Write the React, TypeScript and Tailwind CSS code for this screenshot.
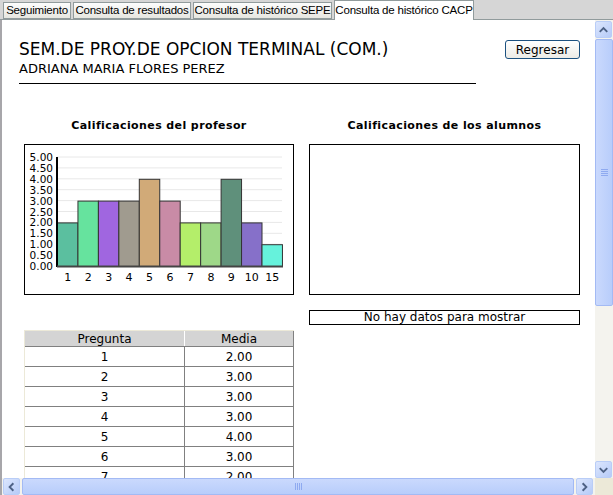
import React from "react";

const data = [
  { q: "1", v: 2 },
  { q: "2", v: 3 },
  { q: "3", v: 3 },
  { q: "4", v: 3 },
  { q: "5", v: 4 },
  { q: "6", v: 3 },
  { q: "7", v: 2 },
  { q: "8", v: 2 },
  { q: "9", v: 4 },
  { q: "10", v: 2 },
  { q: "15", v: 1 },
];

const colors = [
  "#5bbf9f",
  "#66e39e",
  "#a066e0",
  "#a09b8f",
  "#d1aa78",
  "#c98ba6",
  "#b4ee6a",
  "#9ed888",
  "#5f907b",
  "#8670c9",
  "#66f2dc",
];

const Tab = ({ label, active, w }: { label: string; active?: boolean; w: string }) => (
  <div
    className={
      active
        ? `${w} h-[20px] bg-white border-x border-t border-[#919b9c] flex items-center justify-center -mb-px z-10`
        : `${w} h-[17px] mt-[2px] bg-gradient-to-b from-[#fdfdfd] to-[#e6e6e0] border border-[#919b9c] flex items-center justify-center`
    }
  >
    <span className="text-[11.5px] leading-none text-black whitespace-nowrap tracking-[-0.2px]">{label}</span>
  </div>
);

const Chart = () => {
  const x0 = 32;
  const y0 = 121;
  const unit = 21.8;
  const bw = 20.45;
  const ticks = Array.from({ length: 11 }, (_, i) => i * 0.5);
  return (
    <svg width="268" height="149" className="block" style={{ fontFamily: "'DejaVu Sans', sans-serif" }}>
      {ticks.map((t) => (
        <line key={t} x1={x0} x2={257} y1={y0 - t * unit} y2={y0 - t * unit} stroke="#e8e8e8" strokeWidth="1" />
      ))}
      {ticks.map((t) => (
        <text key={"l" + t} x={28} y={y0 - t * unit + 4} fontSize="10.5" textAnchor="end" fill="#000">
          {t.toFixed(2)}
        </text>
      ))}
      {data.map((d, i) => (
        <g key={d.q}>
          <rect
            x={x0 + i * bw + 0.5}
            y={y0 - d.v * unit + 0.5}
            width={bw}
            height={d.v * unit}
            fill={colors[i]}
            stroke="#333"
            strokeWidth="1"
          />
          <text x={x0 + i * bw + bw / 2 + 0.5} y={136} fontSize="11" textAnchor="middle" fill="#000">
            {d.q}
          </text>
        </g>
      ))}
      <line x1={x0} x2={x0} y1={12} y2={122} stroke="#000" strokeWidth="2" />
      <line x1={x0} x2={258} y1={121.5} y2={121.5} stroke="#444" strokeWidth="2" />
    </svg>
  );
};

const Arrow = ({ dir }: { dir: "up" | "down" | "left" | "right" }) => {
  const d = {
    up: "M4 10 L8 6 L12 10",
    down: "M4 6 L8 10 L12 6",
    left: "M10 4 L6 8 L10 12",
    right: "M6 4 L10 8 L6 12",
  }[dir];
  return (
    <svg width="16" height="16" viewBox="0 0 16 16">
      <path d={d} stroke="#4d6185" strokeWidth="2" fill="none" />
    </svg>
  );
};

const SBtn = ({ dir }: { dir: "up" | "down" | "left" | "right" }) => (
  <div className="w-[17px] h-[17px] rounded-[2px] border border-[#b9cdf7] bg-gradient-to-br from-[#dce6fd] to-[#b6cbf8] flex items-center justify-center">
    <Arrow dir={dir} />
  </div>
);

const Grip = ({ vertical }: { vertical?: boolean }) => (
  <div className={vertical ? "flex flex-col gap-[1px]" : "flex gap-[1px]"}>
    {[0, 1, 2, 3].map((i) => (
      <div key={i} className={vertical ? "w-[7px] h-px bg-[#8faaf0]" : "w-px h-[7px] bg-[#8faaf0]"} />
    ))}
  </div>
);

export default function App() {
  return (
    <div
      className="w-[613px] h-[495px] flex flex-col bg-white overflow-hidden"
      style={{ fontFamily: "'DejaVu Sans', Verdana, sans-serif" }}
    >
      <div className="h-[20px] flex items-start bg-[#d6d6d6] pl-[3px] gap-[2px] border-b border-[#919b9c]" style={{ fontFamily: "'Liberation Sans', Arial, sans-serif" }}>
        <Tab label="Seguimiento" w="w-[68px]" />
        <Tab label="Consulta de resultados" w="w-[118px]" />
        <Tab label="Consulta de histórico SEPE" w="w-[139px]" />
        <Tab label="Consulta de histórico CACP" w="w-[140px]" active />
      </div>
      <div className="flex-1 flex border-l-2 border-[#a7a6aa] min-h-0">
        <div className="flex-1 flex flex-col min-w-0">
          <div className="flex-1 overflow-hidden min-h-0">
            <div className="pt-[19px] pl-[17px] pr-[15px] flex justify-between items-start">
              <div>
                <div className="text-[17px] leading-[20px] text-black">SEM.DE PROY.DE OPCION TERMINAL (COM.)</div>
                <div className="text-[13px] leading-[16px] text-black mt-[2px]">ADRIANA MARIA FLORES PEREZ</div>
                <div className="w-[457px] h-px bg-black mt-[6px]" />
              </div>
              <button className="mt-[1px] w-[75px] h-[19px] rounded-[3px] border border-[#1c5180] bg-gradient-to-b from-white to-[#ecebe6] text-[12px] leading-none text-black">
                Regresar
              </button>
            </div>
            <div className="flex gap-[15px] pl-[22px] mt-[34px]">
              <div className="w-[270px] flex flex-col">
                <div className="text-center text-[11px] font-bold leading-[16px] tracking-[0.4px]">Calificaciones del profesor</div>
                <div className="mt-[10px] w-[270px] h-[151px] border border-black">
                  <Chart />
                </div>
                <div className="mt-[35px] w-[270px] border-t border-l border-[#ece9d8] text-[12px]">
                  <div className="flex h-[16px] bg-[#d4d4d4] border-b border-[#808080]">
                    <div className="w-[160px] text-center leading-[16px] border-r border-white">Pregunta</div>
                    <div className="flex-1 text-center leading-[16px] border-r border-[#808080]">Media</div>
                  </div>
                  {data.map((d) => (
                    <div key={d.q} className="flex h-[20px] border-b border-[#808080]">
                      <div className="w-[160px] text-center leading-[20px] border-r border-[#808080]">{d.q}</div>
                      <div className="flex-1 text-center leading-[20px] border-r border-[#808080]">{d.v.toFixed(2)}</div>
                    </div>
                  ))}
                </div>
              </div>
              <div className="w-[271px] flex flex-col">
                <div className="text-center text-[11px] font-bold leading-[16px] tracking-[0.4px]">Calificaciones de los alumnos</div>
                <div className="mt-[10px] w-[271px] h-[151px] border border-black" />
                <div className="mt-[15px] w-[271px] h-[15px] border border-black text-center text-[12px] leading-[13px]">
                  No hay datos para mostrar
                </div>
              </div>
            </div>
          </div>
          <div className="h-[17px] flex items-center gap-[2px] pl-px pr-[2px] bg-[#f4f3ee]">
            <SBtn dir="left" />
            <div className="flex-1 h-[17px] rounded-[2px] border border-[#a3baf4] bg-gradient-to-b from-[#cad9fd] to-[#b8cdfb] flex items-center justify-center">
              <Grip />
            </div>
            <SBtn dir="right" />
          </div>
        </div>
        <div className="w-[18px] flex flex-col bg-[#f4f3ee] pt-[1px]">
          <SBtn dir="up" />
          <div className="h-[267px] mt-px rounded-[2px] border border-[#a3baf4] bg-gradient-to-r from-[#cad9fd] to-[#b8cdfb] flex items-center justify-center">
            <Grip vertical />
          </div>
          <div className="flex-1" />
          <SBtn dir="down" />
          <div className="h-[17px] bg-[#ece9d8]" />
        </div>
      </div>
    </div>
  );
}
